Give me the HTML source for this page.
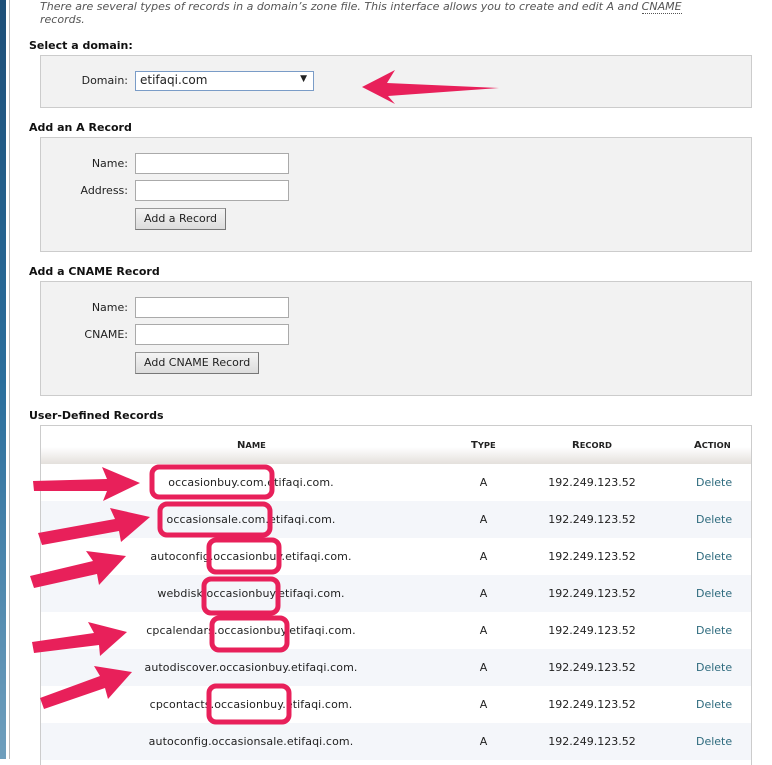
<!DOCTYPE html>
<html><head><style>
*{margin:0;padding:0;box-sizing:border-box}
body{width:772px;height:759px;overflow:hidden;background:#fff;font-family:"DejaVu Sans","Liberation Sans",sans-serif;font-size:11px;color:#222;position:relative}
.a{position:absolute}
.bar{left:0;top:0;width:6px;height:759px;background:linear-gradient(#1d4f78,#2a6e9c 50%,#6f9fbd)}
.line{left:9px;top:0;width:1px;height:759px;background:#bbb}
.box{background:#f2f2f2;border:1px solid #ccc;left:40px;width:712px}
h3{position:absolute;left:29px;font-size:11px;font-weight:bold;color:#111}
.lbl{text-align:right;width:90px;left:38px}
.inp{left:135px;width:154px;height:21px;background:#fff;border:1px solid #aaa}
.btn{left:135px;height:22px;background:linear-gradient(#f4f4f4,#dcdcdc);border:1px solid #999;border-bottom-color:#777;border-right-color:#777;padding:3px 8px;font-size:11px;color:#222}
.tb{left:40px;top:425px;width:712px;height:340px;border:1px solid #ccc;border-bottom:none}
.hd{position:absolute;left:0;top:0;width:710px;height:38px;background:linear-gradient(#fff 0%,#fff 55%,#e4e0dc 100%);font-weight:bold;font-size:10px;color:#222}
.row{position:absolute;left:0;width:710px;height:37px;line-height:37px}
.c1{position:absolute;left:0;width:420px;text-align:center;letter-spacing:0.1px}
.c2{position:absolute;left:430px;width:25px;text-align:center}
.c3{position:absolute;left:495px;width:112px;text-align:center}
.c4{position:absolute;left:655px;color:#2d6a7d}
</style></head><body>
<div class="a bar"></div><div class="a line"></div>
<div class="a" style="left:40px;top:0;font-style:italic;color:#555;line-height:13px;width:700px">There are several types of records in a domain’s zone file. This interface allows you to create and edit A and <span style="border-bottom:1px dotted #555">CNAME</span><br>records.</div>
<h3 style="top:39px">Select a domain:</h3>
<div class="a box" style="top:55px;height:53px"></div>
<div class="a lbl" style="top:74px">Domain:</div>
<div class="a" style="left:135px;top:71px;width:179px;height:20px;background:#fff;border:1px solid #7a9cc7;padding:1px 4px;font-size:12px">etifaqi.com<span style="position:absolute;right:6px;top:2px;font-size:9px">▼</span></div>
<h3 style="top:121px">Add an A Record</h3>
<div class="a box" style="top:137px;height:115px"></div>
<div class="a lbl" style="top:157px">Name:</div>
<div class="a inp" style="top:153px"></div>
<div class="a lbl" style="top:184px">Address:</div>
<div class="a inp" style="top:180px"></div>
<div class="a btn" style="top:208px">Add a Record</div>
<h3 style="top:265px">Add a CNAME Record</h3>
<div class="a box" style="top:281px;height:115px"></div>
<div class="a lbl" style="top:301px">Name:</div>
<div class="a inp" style="top:297px"></div>
<div class="a lbl" style="top:328px">CNAME:</div>
<div class="a inp" style="top:324px"></div>
<div class="a btn" style="top:352px">Add CNAME Record</div>
<h3 style="top:409px">User-Defined Records</h3>
<div class="a tb">
<div class="hd"><span style="position:absolute;left:196px;top:14px">N<small>AME</small></span><span style="position:absolute;left:430px;top:14px">T<small>YPE</small></span><span style="position:absolute;left:531px;top:14px">R<small>ECORD</small></span><span style="position:absolute;left:653px;top:14px">A<small>CTION</small></span></div>
<div class="row" style="top:38px;background:#fff"><span class="c1">occasionbuy.com.etifaqi.com.</span><span class="c2">A</span><span class="c3">192.249.123.52</span><span class="c4">Delete</span></div>
<div class="row" style="top:75px;background:#f4f6fa"><span class="c1">occasionsale.com.etifaqi.com.</span><span class="c2">A</span><span class="c3">192.249.123.52</span><span class="c4">Delete</span></div>
<div class="row" style="top:112px;background:#fff"><span class="c1">autoconfig.occasionbuy.etifaqi.com.</span><span class="c2">A</span><span class="c3">192.249.123.52</span><span class="c4">Delete</span></div>
<div class="row" style="top:149px;background:#f4f6fa"><span class="c1">webdisk.occasionbuy.etifaqi.com.</span><span class="c2">A</span><span class="c3">192.249.123.52</span><span class="c4">Delete</span></div>
<div class="row" style="top:186px;background:#fff"><span class="c1">cpcalendars.occasionbuy.etifaqi.com.</span><span class="c2">A</span><span class="c3">192.249.123.52</span><span class="c4">Delete</span></div>
<div class="row" style="top:223px;background:#f4f6fa"><span class="c1">autodiscover.occasionbuy.etifaqi.com.</span><span class="c2">A</span><span class="c3">192.249.123.52</span><span class="c4">Delete</span></div>
<div class="row" style="top:260px;background:#fff"><span class="c1">cpcontacts.occasionbuy.etifaqi.com.</span><span class="c2">A</span><span class="c3">192.249.123.52</span><span class="c4">Delete</span></div>
<div class="row" style="top:297px;background:#f4f6fa"><span class="c1">autoconfig.occasionsale.etifaqi.com.</span><span class="c2">A</span><span class="c3">192.249.123.52</span><span class="c4">Delete</span></div>
</div>
<svg class="a" style="left:0;top:0" width="772" height="759">
<g fill="none" stroke="#e8205a" stroke-width="5">
<rect x="152" y="467" width="120" height="30" rx="7"/>
<rect x="160" y="504" width="110" height="31" rx="7"/>
<rect x="209" y="540" width="70" height="32" rx="7"/>
<rect x="204" y="579" width="74" height="34" rx="7"/>
<rect x="212" y="618" width="75" height="32" rx="7"/>
<rect x="209" y="686" width="80" height="36" rx="7"/>
</g>
<g fill="#e8205a">
<polygon points="362,87 395,70 387,83 499,88 388,96 395,104"/>
<polygon points="140,483 102,467 107,479 33,481 34,491 107,491 103,501"/>
<polygon points="150,517 110,508 115,519 38,533 42,545 119,531 121,542"/>
<polygon points="126,556 86,551 93,561 30,576 34,588 97,574 99,585"/>
<polygon points="127,632 88,622 94,633 32,642 34,653 99,645 100,656"/>
<polygon points="132,672 94,666 100,676 40,698 44,709 105,688 108,699"/>
</g>
</svg>
</body></html>
